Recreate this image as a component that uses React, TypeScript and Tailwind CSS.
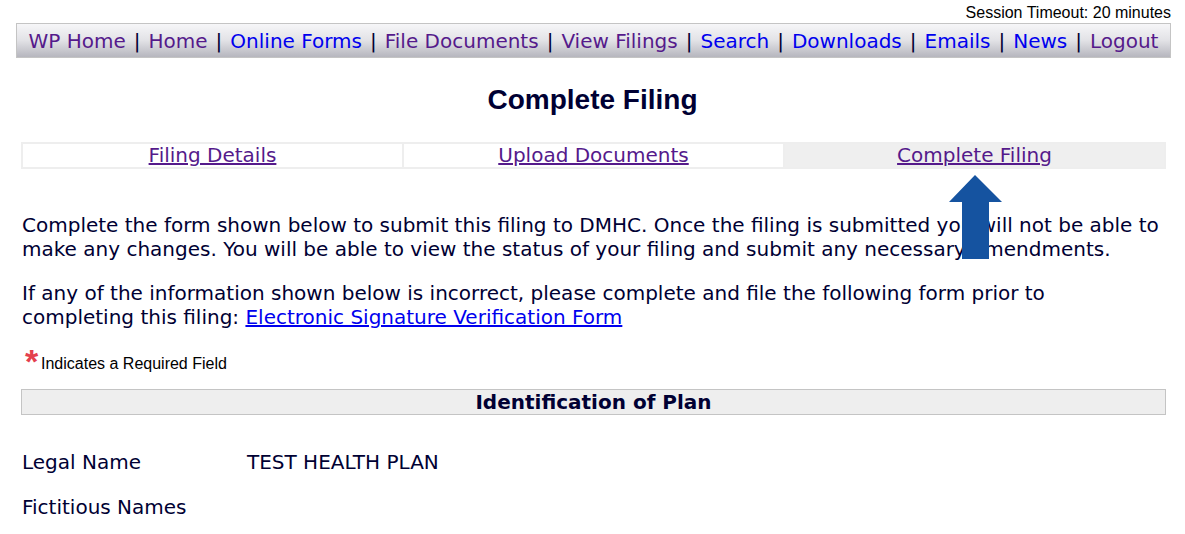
export default function App() {
  const nav: { label: string; visited: boolean }[] = [
    { label: "WP Home", visited: true },
    { label: "Home", visited: true },
    { label: "Online Forms", visited: false },
    { label: "File Documents", visited: true },
    { label: "View Filings", visited: true },
    { label: "Search", visited: false },
    { label: "Downloads", visited: false },
    { label: "Emails", visited: false },
    { label: "News", visited: false },
    { label: "Logout", visited: true },
  ];

  return (
    <div className="relative min-h-[534px] bg-white text-[#000033] font-['DejaVu_Sans',sans-serif]">
      <div className="flex justify-end pr-[14px] pt-[4px] h-[23px] text-[16px] leading-[18px] text-black font-['Liberation_Sans',sans-serif]">
        Session Timeout: 20 minutes
      </div>

      <div className="ml-[16px] mr-[14px] h-[35px] border border-[#c4c4c4] bg-gradient-to-b from-[#f6f6f8] via-[#e2e2e6] to-[#b6b6be] text-center text-[20px] leading-[34px] whitespace-nowrap">
        {nav.map((n, i) => (
          <span key={n.label}>
            {i > 0 && <span className="mx-[8px] text-[#000033]">|</span>}
            <a href="#" className={n.visited ? "text-[#551a8b]" : "text-[#0000ee]"}>
              {n.label}
            </a>
          </span>
        ))}
      </div>

      <h1 className="mt-[26px] text-center text-[28px] leading-[32px] font-bold font-['Liberation_Sans',sans-serif]">
        Complete Filing
      </h1>

      <div className="ml-[21px] mr-[19px] mt-[26px] grid grid-cols-3 border-2 border-[#eeeeee] bg-[#eeeeee] gap-[2px] text-[20px] leading-[23px]">
        <div className="bg-white text-center">
          <a href="#" className="text-[#551a8b] underline">Filing Details</a>
        </div>
        <div className="bg-white text-center">
          <a href="#" className="text-[#551a8b] underline">Upload Documents</a>
        </div>
        <div className="bg-[#efefef] text-center">
          <a href="#" className="text-[#551a8b] underline">Complete Filing</a>
        </div>
      </div>

      <div className="px-[22px] text-[20px] leading-[24px]">
        <p className="mt-[44px]">
          Complete the form shown below to submit this filing to DMHC. Once the filing is submitted you will not be able to make any changes. You will be able to view the status of your filing and submit any necessary amendments.
        </p>
        <p className="mt-[20px]">
          If any of the information shown below is incorrect, please complete and file the following form prior to completing this filing:{" "}
          <a href="#" className="text-[#0000ee] underline">Electronic Signature Verification Form</a>
        </p>

        <div className="mt-[23px] flex items-start font-['Liberation_Sans',sans-serif] text-[16px] leading-[18px] text-black">
          <span className="w-[19px] text-center text-[#e4404e] text-[34px] leading-[26px] font-bold mt-[-4px]">*</span>
          <span className="mt-[3px]">Indicates a Required Field</span>
        </div>
      </div>

      <div className="ml-[21px] mr-[19px] mt-[15px] h-[26px] border border-[#c4c4c4] bg-[#eeeeee] flex items-center justify-center text-[20px] font-bold">
        Identification of Plan
      </div>

      <div className="px-[22px] text-[20px] leading-[24px]">
        <div className="mt-[35px] flex">
          <span className="w-[225px]">Legal Name</span>
          <span>TEST HEALTH PLAN</span>
        </div>
        <div className="mt-[21px]">Fictitious Names</div>
      </div>

      <svg className="absolute left-[948px] top-[175px]" width="55" height="85" viewBox="0 0 55 85">
        <path d="M27 0 L54 27 L41 27 L41 84 L14 84 L14 27 L1 27 Z" fill="#1553a0" />
      </svg>
    </div>
  );
}
